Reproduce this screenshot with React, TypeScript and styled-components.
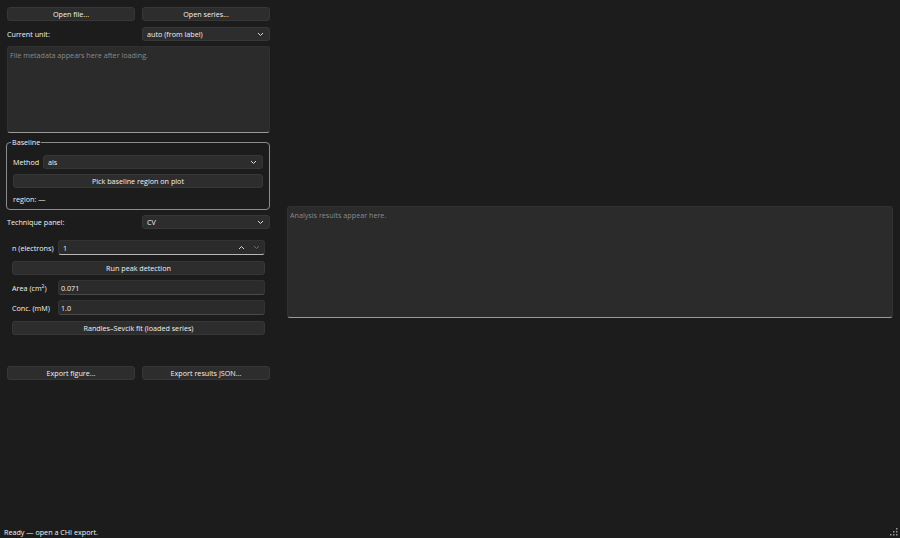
import * as React from "react";
import styled, { createGlobalStyle } from "styled-components";

const color = {
  window: "#1c1c1c",
  control: "#2d2d2d",
  controlBorder: "#373737",
  field: "#2b2b2b",
  text: "#f2f2f2",
  muted: "#8a8a8a",
  frame: "#8c8c8c",
  underline: "#9a9a9a"
};

const GlobalStyle = createGlobalStyle`
  html, body {
    margin: 0;
    padding: 0;
    background: ${color.window};
  }
  body {
    font-family: "Open Sans", "Noto Sans", sans-serif;
    font-size: 7.2px;
    color: ${color.text};
  }
`;

const Page = styled.div`
  width: 900px;
  height: 538px;
  display: flex;
  flex-direction: column;
  background: ${color.window};
  overflow: hidden;
`;

const Main = styled.div`
  height: 523px;
  display: flex;
`;

const LeftCol = styled.div`
  width: 263px;
  padding: 7px 0 0 7px;
  display: flex;
  flex-direction: column;
`;

const RightCol = styled.div`
  flex: 1;
  padding: 0 7px 0 17px;
  display: flex;
  align-items: center;
`;

const PairRow = styled.div<{ $top?: number }>`
  display: grid;
  grid-template-columns: 1fr 1fr;
  column-gap: 7px;
  align-items: center;
  margin-top: ${p => p.$top || 0}px;
`;

const Button = styled.button<{ $top?: number }>`
  height: 14px;
  margin-top: ${p => p.$top || 0}px;
  padding: 0 4px;
  border: 1px solid ${color.controlBorder};
  border-radius: 3px;
  background: ${color.control};
  color: ${color.text};
  font: inherit;
  line-height: 12px;
  text-align: center;
  white-space: nowrap;
`;

const Label = styled.span<{ $width?: number }>`
  line-height: 14px;
  white-space: nowrap;
  width: ${p => (p.$width ? p.$width + "px" : "auto")};
  flex-shrink: 0;
`;

const Combo = styled.div`
  height: 14px;
  flex: 1;
  display: flex;
  align-items: center;
  justify-content: space-between;
  padding: 0 5px 0 4px;
  border: 1px solid ${color.controlBorder};
  border-radius: 3px;
  background: ${color.control};
  box-sizing: border-box;
`;

const TextBox = styled.div<{ $height: number }>`
  height: ${p => p.$height}px;
  box-sizing: border-box;
  padding: 3px 2px;
  border-radius: 3px;
  background: ${color.field};
  border: 1px solid #303030;
  border-bottom: 1px solid ${color.underline};
  color: ${color.muted};
  line-height: 10px;
`;

const GroupBox = styled.fieldset`
  margin: 4px 0 0 -1px;
  padding: 8px 6px 5px 6px;
  border: 1px solid ${color.frame};
  border-radius: 4px;
  display: flex;
  flex-direction: column;
`;

const Legend = styled.legend`
  padding: 0 1px;
  margin-left: -2px;
  line-height: 10px;
`;

const FormRow = styled.div<{ $top?: number }>`
  display: flex;
  align-items: center;
  margin-top: ${p => p.$top || 0}px;
`;

const Note = styled.div`
  margin-top: 6px;
  line-height: 10px;
`;

const TechniquePanel = styled.div`
  margin-top: 11px;
  padding: 0 5px 0 5px;
  display: flex;
  flex-direction: column;
`;

const LineEdit = styled.div<{ $focus?: boolean }>`
  height: 15px;
  flex: 1;
  display: flex;
  align-items: center;
  justify-content: space-between;
  box-sizing: border-box;
  padding: 0 4px 0 2px;
  border-radius: 3px;
  background: ${color.field};
  border: 1px solid #333333;
  border-bottom: 1px solid ${p => (p.$focus ? "#b8b8b8" : "#4a4a4a")};
`;

const SpinArrows = styled.span`
  display: flex;
  gap: 8px;
  align-items: center;
`;

const StatusBar = styled.div`
  height: 15px;
  display: flex;
  align-items: center;
  justify-content: space-between;
  padding: 2px 2px 0 4px;
  box-sizing: border-box;
`;

const Chevron = ({ up, dim }: { up?: boolean; dim?: boolean }) => (
  <svg width="7" height="5" viewBox="0 0 7 5">
    <path
      d={up ? "M1 4 L3.5 1.5 L6 4" : "M1 1 L3.5 3.5 L6 1"}
      fill="none"
      stroke={dim ? "#6e6e6e" : "#d8d8d8"}
      strokeWidth="1"
    />
  </svg>
);

const SizeGrip = () => (
  <svg width="8" height="8" viewBox="0 0 8 8">
    {[
      [6, 0],
      [6, 3],
      [3, 3],
      [6, 6],
      [3, 6],
      [0, 6]
    ].map(([x, y], i) => (
      <rect key={i} x={x} y={y} width="1.5" height="1.5" fill="#9a9a9a" />
    ))}
  </svg>
);

export default function App() {
  return (
    <Page>
      <GlobalStyle />
      <Main>
        <LeftCol>
          <PairRow>
            <Button>Open file...</Button>
            <Button>Open series...</Button>
          </PairRow>
          <PairRow $top={6}>
            <Label>Current unit:</Label>
            <Combo>
              <span>auto (from label)</span>
              <Chevron />
            </Combo>
          </PairRow>
          <div style={{ marginTop: 5 }} />
          <TextBox $height={87}>File metadata appears here after loading.</TextBox>
          <GroupBox>
            <Legend>Baseline</Legend>
            <FormRow>
              <Label $width={30}>Method</Label>
              <Combo>
                <span>als</span>
                <Chevron />
              </Combo>
            </FormRow>
            <Button $top={5}>Pick baseline region on plot</Button>
            <Note>region: —</Note>
          </GroupBox>
          <PairRow $top={5}>
            <Label>Technique panel:</Label>
            <Combo>
              <span>CV</span>
              <Chevron />
            </Combo>
          </PairRow>
          <TechniquePanel>
            <FormRow>
              <Label $width={46}>n (electrons)</Label>
              <LineEdit $focus>
                <span style={{ paddingLeft: 2 }}>1</span>
                <SpinArrows>
                  <Chevron up />
                  <Chevron dim />
                </SpinArrows>
              </LineEdit>
            </FormRow>
            <Button $top={6}>Run peak detection</Button>
            <FormRow $top={5}>
              <Label $width={46}>
                Area (cm<sup style={{ fontSize: 5, lineHeight: 0 }}>2</sup>)
              </Label>
              <LineEdit>
                <span>0.071</span>
              </LineEdit>
            </FormRow>
            <FormRow $top={5}>
              <Label $width={46}>Conc. (mM)</Label>
              <LineEdit>
                <span>1.0</span>
              </LineEdit>
            </FormRow>
            <Button $top={6}>Randles–Sevcik fit (loaded series)</Button>
          </TechniquePanel>
          <PairRow $top={31}>
            <Button>Export figure...</Button>
            <Button>Export results JSON...</Button>
          </PairRow>
        </LeftCol>
        <RightCol>
          <TextBox $height={112} style={{ flex: 1 }}>
            Analysis results appear here.
          </TextBox>
        </RightCol>
      </Main>
      <StatusBar>
        <span>Ready — open a CHI export.</span>
        <SizeGrip />
      </StatusBar>
    </Page>
  );
}
